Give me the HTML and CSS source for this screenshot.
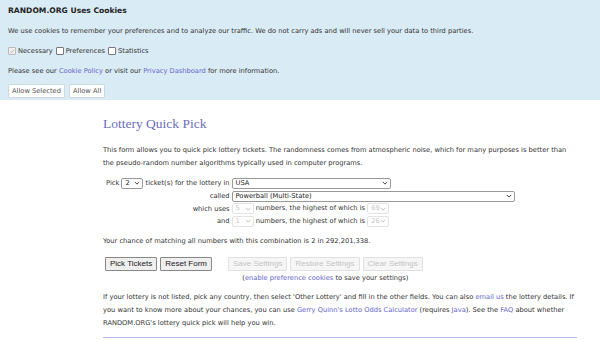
FILE: index.html
```html
<!DOCTYPE html>
<html>
<head>
<meta charset="utf-8">
<link rel="stylesheet" href="styles.css">
</head>
<body>
<div class="banner">
  <div class="bline title">RANDOM.ORG Uses Cookies</div>
  <div class="bline">We use cookies to remember your preferences and to analyze our traffic. We do not carry ads and will never sell your data to third parties.</div>
  <div class="bline checks">
    <span class="cb checked"><svg viewBox="0 0 8 8" width="7" height="7"><path d="M1.5 4.2 L3.2 5.8 L6.5 2" fill="none" stroke="#aaa" stroke-width="1"/></svg></span><span class="cbl">Necessary</span>
    <span class="cb"></span><span class="cbl">Preferences</span>
    <span class="cb"></span><span class="cbl">Statistics</span>
  </div>
  <div class="bline">Please see our <a class="lnk">Cookie Policy</a> or visit our <a class="lnk">Privacy Dashboard</a> for more information.</div>
  <div class="bline btns"><span class="bbtn">Allow Selected</span><span class="bbtn">Allow All</span></div>
</div>
<div class="main">
  <h1 class="heading">Lottery Quick Pick</h1>
  <p class="para intro">This form allows you to quick pick lottery tickets. The randomness comes from atmospheric noise, which for many purposes is better than the pseudo-random number algorithms typically used in computer programs.</p>
  <table class="form">
    <tr>
      <td class="lab">Pick <span class="sel w-num">2<svg class="chev" viewBox="0 0 8 5" width="6" height="4"><path d="M1 1 L4 4 L7 1" fill="none" stroke="#333" stroke-width="1.2"/></svg></span> ticket(s) for the lottery in</td>
      <td><span class="sel w-country">USA<svg class="chev" viewBox="0 0 8 5" width="6" height="4"><path d="M1 1 L4 4 L7 1" fill="none" stroke="#333" stroke-width="1.2"/></svg></span></td>
    </tr>
    <tr>
      <td class="lab">called</td>
      <td><span class="sel w-name">Powerball (Multi-State)<svg class="chev" viewBox="0 0 8 5" width="6" height="4"><path d="M1 1 L4 4 L7 1" fill="none" stroke="#333" stroke-width="1.2"/></svg></span></td>
    </tr>
    <tr>
      <td class="lab">which uses</td>
      <td><span class="sel dis w-num">5<svg class="chev" viewBox="0 0 8 5" width="6" height="4"><path d="M1 1 L4 4 L7 1" fill="none" stroke="#bbb" stroke-width="1.2"/></svg></span> numbers, the highest of which is <span class="sel dis w-num">69<svg class="chev" viewBox="0 0 8 5" width="6" height="4"><path d="M1 1 L4 4 L7 1" fill="none" stroke="#bbb" stroke-width="1.2"/></svg></span></td>
    </tr>
    <tr>
      <td class="lab">and</td>
      <td><span class="sel dis w-num">1<svg class="chev" viewBox="0 0 8 5" width="6" height="4"><path d="M1 1 L4 4 L7 1" fill="none" stroke="#bbb" stroke-width="1.2"/></svg></span> numbers, the highest of which is <span class="sel dis w-num">26<svg class="chev" viewBox="0 0 8 5" width="6" height="4"><path d="M1 1 L4 4 L7 1" fill="none" stroke="#bbb" stroke-width="1.2"/></svg></span></td>
    </tr>
  </table>
  <p class="chance">Your chance of matching all numbers with this combination is 2 in 292,201,338.</p>
  <div class="actions">
    <div class="grp"><span class="btn">Pick Tickets</span><span class="btn">Reset Form</span></div>
    <div class="settings">
      <div class="grp"><span class="btn dis">Save Settings</span><span class="btn dis">Restore Settings</span><span class="btn dis">Clear Settings</span></div>
      <div class="note">(<a class="lnk">enable preference cookies</a> to save your settings)</div>
    </div>
  </div>
  <p class="para para2">If your lottery is not listed, pick any country, then select 'Other Lottery' and fill in the other fields. You can also <a class="lnk">email us</a> the lottery details. If you want to know more about your chances, you can use <a class="lnk">Gerry Quinn's Lotto Odds Calculator</a> (requires <a class="lnk">Java</a>). See the <a class="lnk">FAQ</a> about whether RANDOM.ORG's lottery quick pick will help you win.</p>
  <hr class="rule">
</div>
</body>
</html>
```
FILE: styles.css
```css
html, body { margin: 0; padding: 0; background: #fff; }
body {
  font-family: "DejaVu Sans", Verdana, sans-serif;
  font-size: 6.7px;
  color: #333;
}
.banner {
  background: #d9ebf5;
  height: 100px;
  box-sizing: border-box;
  padding: 1px 8px 0;
}
.bline { height: 20px; line-height: 20px; white-space: nowrap; }
.title { font-weight: bold; color: #222; font-size: 7.6px; }
.checks { display: flex; align-items: center; }
.cb {
  width: 6px; height: 6px;
  border: 1px solid #777; background: #fff; border-radius: 1px;
  display: inline-flex; align-items: center; justify-content: center;
  margin-right: 2px;
}
.cb.checked { border-color: #bbb; background: #eee; }
.cbl { margin-right: 3px; }
.lnk { color: #6666cc; text-decoration: none; }
.btns { display: flex; align-items: center; gap: 4px; }
.bbtn {
  background: #fff; border: 1px solid #cfd8dc; color: #555;
  height: 12px; line-height: 12px; padding: 0 3px; border-radius: 1px;
}
.main { margin-left: 103px; width: 474px; padding-top: 14px; }
.heading {
  font-family: "Liberation Serif", Georgia, serif;
  font-weight: normal;
  color: #6d6dbd;
  font-size: 13.5px;
  line-height: 20px;
  margin: 0 0 10px;
}
.para { margin: 0; line-height: 13px; }
.intro { max-width: 466px; }
.form { border-collapse: collapse; margin-top: 7px; }
.form td { padding: 0; height: 12.7px; white-space: nowrap; }
.form td.lab { text-align: right; padding: 0 2px 0 3px; }
.sel {
  display: inline-flex; align-items: center; justify-content: space-between;
  box-sizing: border-box; height: 11px; padding: 0 2px 0 3px;
  border: 1px solid #999; border-radius: 2px; background: #fff; color: #222;
  vertical-align: middle; line-height: 9px;
}
.sel.dis { border-color: #e2e2e2; color: #c4c4c4; }
.w-num { width: 22px; }
.w-country { width: 159px; }
.w-name { width: 283px; }
.chance { margin: 7px 0 0; line-height: 13px; }
.actions { display: flex; align-items: flex-start; margin-top: 9px; gap: 16px; padding-left: 2px; }
.grp { display: flex; gap: 3px; }
.btn {
  height: 14px; line-height: 12px; box-sizing: border-box;
  border: 1px solid #888; background: #efefef; color: #222;
  padding: 0 4px; border-radius: 1px; font-family: "Liberation Sans", Arial, sans-serif; font-size: 8px;
}
.btn.dis { border-color: #e0e0e0; background: #f6f6f6; color: #c4c4c4; }
.settings { display: flex; flex-direction: column; align-items: center; }
.note { line-height: 13px; margin-top: 1px; }
.para2 { margin-top: 6px; }
.rule { border: 0; border-top: 1px solid #b8b8e8; margin: 7px 0 0; }
```
